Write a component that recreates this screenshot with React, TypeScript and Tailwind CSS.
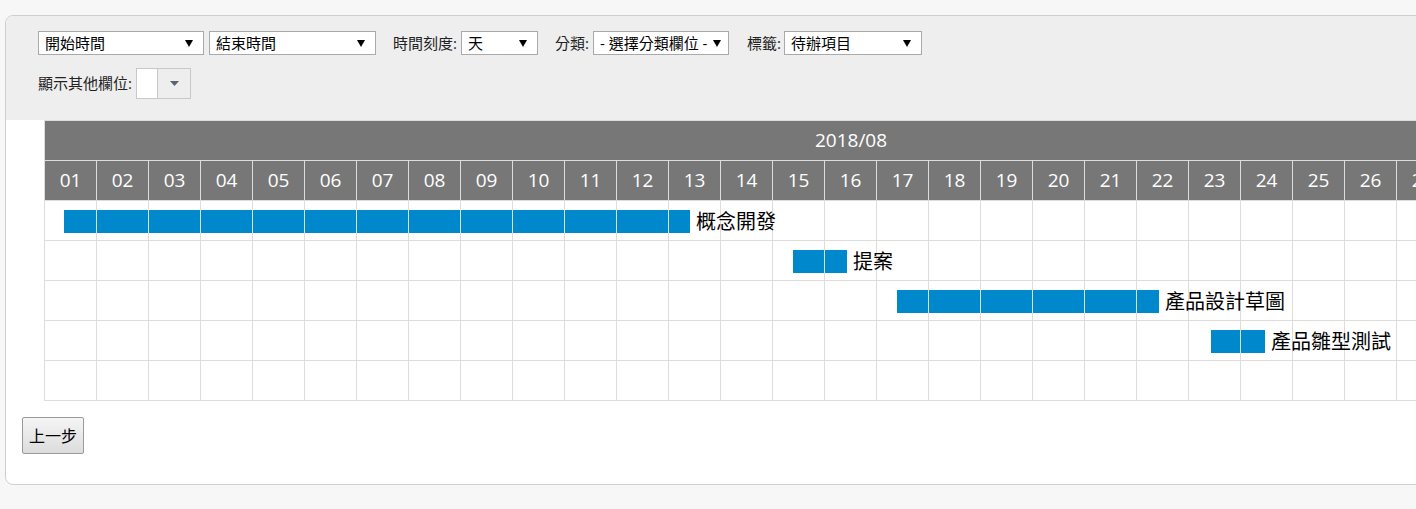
const DAYS = Array.from({ length: 31 }, (_, i) => String(i + 1).padStart(2, "0"));

const TASKS = [
  { name: "概念開發", left: 19, width: 626 },
  { name: "提案", left: 748, width: 54 },
  { name: "產品設計草圖", left: 852, width: 262 },
  { name: "產品雛型測試", left: 1166, width: 54 },
  null,
];

const cjk = "font-['Open_Sans','Noto_Sans_CJK_TC',sans-serif]";

function Caret() {
  return (
    <svg width="8" height="7" viewBox="0 0 8 7" className="shrink-0">
      <polygon points="0,0 8,0 4,7" fill="#000" />
    </svg>
  );
}

function FakeSelect({ label, width }: { label: string; width: string }) {
  return (
    <div
      className={`${width} h-[24px] flex items-center justify-between bg-white border border-[#a9a9a9] pl-[6px] pr-[10px] text-[15px] leading-none text-black`}
    >
      <span className="whitespace-nowrap">{label}</span>
      <Caret />
    </div>
  );
}

export default function App() {
  return (
    <div className={`w-[1416px] h-[509px] overflow-hidden bg-[#f7f7f7] pt-[15px] pl-[5px] ${cjk}`}>
      <div className="w-[1700px] h-[470px] bg-white border border-[#cfcfcf] rounded-[8px] overflow-hidden">
        {/* toolbar */}
        <div className="bg-[#eeeeee] pt-[15px] pl-[32px] pb-[21px] text-[#222]">
          <div className="flex items-center text-[15px]">
            <FakeSelect label="開始時間" width="w-[166px]" />
            <div className="ml-[5px]">
              <FakeSelect label="結束時間" width="w-[167px]" />
            </div>
            <span className="ml-[17px] w-[68px] whitespace-nowrap">時間刻度:</span>
            <FakeSelect label="天" width="w-[77px]" />
            <span className="ml-[17px] w-[38px] whitespace-nowrap">分類:</span>
            <div className="w-[136px] h-[24px] flex items-center justify-between bg-white border border-[#a9a9a9] pl-[6px] pr-[7px] text-[15px] leading-none text-black">
              <span className="whitespace-nowrap">- 選擇分類欄位 -</span>
              <Caret />
            </div>
            <span className="ml-[18px] w-[37px] whitespace-nowrap">標籤:</span>
            <FakeSelect label="待辦項目" width="w-[138px]" />
          </div>
          <div className="flex items-center mt-[13px] text-[15px]">
            <span className="w-[98px] whitespace-nowrap">顯示其他欄位:</span>
            <div className="flex h-[31px] border border-[#c8c8c8]">
              <div className="w-[21px] bg-white border-r border-[#c8c8c8]" />
              <div className="w-[32px] flex items-center justify-center bg-[#eeeeee]">
                <svg width="9" height="5" viewBox="0 0 9 5">
                  <polygon points="0,0 9,0 4.5,5" fill="#5a6275" />
                </svg>
              </div>
            </div>
          </div>
        </div>

        {/* gantt */}
        <div className="ml-[38px] w-[1613px] border-l border-t border-[#dddddd]">
          <div className="h-[40px] bg-[#777777] border-b border-[#dddddd] flex items-center justify-center text-white text-[19px]">
            2018/08
          </div>
          <div className="flex h-[40px] bg-[#777777]">
            {DAYS.map((d) => (
              <div
                key={d}
                className="w-[52px] shrink-0 border-r border-b border-[#dddddd] flex items-center justify-center text-white text-[19px]"
              >
                {d}
              </div>
            ))}
          </div>
          {TASKS.map((t, r) => (
            <div key={r} className="relative h-[40px]">
              {t && (
                <div className="absolute top-[9px] h-[23px] bg-[#0088cc]" style={{ left: t.left, width: t.width }} />
              )}
              <div className="relative flex h-full pointer-events-none">
                {DAYS.map((d) => (
                  <div key={d} className="w-[52px] shrink-0 border-r border-b border-[#dddddd]" />
                ))}
              </div>
              {t && (
                <span
                  className="absolute top-[9px] text-[20px] leading-[23px] text-black whitespace-nowrap"
                  style={{ left: t.left + t.width + 6 }}
                >
                  {t.name}
                </span>
              )}
            </div>
          ))}
        </div>

        <div className="ml-[16px] mt-[16px]">
          <button className="w-[62px] h-[37px] border border-[#9a9a9a] rounded-[2px] bg-gradient-to-b from-[#f5f5f5] to-[#dcdcdc] text-[16px] text-black">
            上一步
          </button>
        </div>
      </div>
    </div>
  );
}
